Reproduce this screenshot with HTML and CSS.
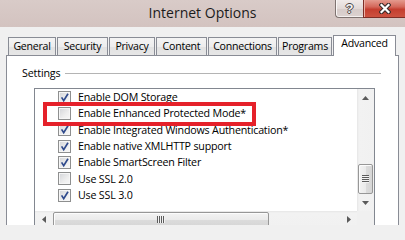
FILE: index.html
```html
<!DOCTYPE html>
<html lang="en">
<head>
<meta charset="utf-8">
<title>Internet Options</title>
<link rel="stylesheet" href="styles.css">
</head>
<body>
<div class="window">
  <header class="titlebar">
    <div class="tb-left"></div>
    <div class="title">Internet Options</div>
    <div class="caption">
      <div class="cap-btn help"><span class="help-glyph">?</span></div>
      <div class="cap-btn close">
        <svg width="12" height="11" viewBox="0 0 12 11">
          <path d="M2.5 2 L9.5 9 M9.5 2 L2.5 9" stroke="#3b2b29" stroke-width="4.4" stroke-linecap="square" fill="none"/>
          <path d="M2.5 2 L9.5 9 M9.5 2 L2.5 9" stroke="#ffffff" stroke-width="2.2" stroke-linecap="square" fill="none"/>
        </svg>
      </div>
    </div>
  </header>
  <div class="client">
    <nav class="tabs">
      <div class="tab t-general">General</div>
      <div class="tab t-security">Security</div>
      <div class="tab t-privacy">Privacy</div>
      <div class="tab t-content">Content</div>
      <div class="tab t-connections">Connections</div>
      <div class="tab t-programs">Programs</div>
      <div class="tab t-advanced active">Advanced</div>
    </nav>
    <section class="panel">
      <div class="group-head">
        <span class="group-label">Settings</span>
        <div class="rule"></div>
      </div>
      <div class="listbox">
        <div class="viewport">
          <div class="items">
            <div class="item"><span class="cb checked"><svg width="11" height="11" viewBox="0 0 11 11"><path d="M2.6 5.4 L4.7 8.6 L9 1.8" stroke="#2f4a8c" stroke-width="1.7" fill="none"/></svg></span><span>Enable DOM Storage</span></div>
            <div class="item"><span class="cb"></span><span>Enable Enhanced Protected Mode*</span></div>
            <div class="item"><span class="cb checked"><svg width="11" height="11" viewBox="0 0 11 11"><path d="M2.6 5.4 L4.7 8.6 L9 1.8" stroke="#2f4a8c" stroke-width="1.7" fill="none"/></svg></span><span>Enable Integrated Windows Authentication*</span></div>
            <div class="item"><span class="cb checked"><svg width="11" height="11" viewBox="0 0 11 11"><path d="M2.6 5.4 L4.7 8.6 L9 1.8" stroke="#2f4a8c" stroke-width="1.7" fill="none"/></svg></span><span>Enable native XMLHTTP support</span></div>
            <div class="item"><span class="cb checked"><svg width="11" height="11" viewBox="0 0 11 11"><path d="M2.6 5.4 L4.7 8.6 L9 1.8" stroke="#2f4a8c" stroke-width="1.7" fill="none"/></svg></span><span>Enable SmartScreen Filter</span></div>
            <div class="item"><span class="cb"></span><span>Use SSL 2.0</span></div>
            <div class="item"><span class="cb checked"><svg width="11" height="11" viewBox="0 0 11 11"><path d="M2.6 5.4 L4.7 8.6 L9 1.8" stroke="#2f4a8c" stroke-width="1.7" fill="none"/></svg></span><span>Use SSL 3.0</span></div>
          </div>
          <div class="callout"></div>
        </div>
        <div class="vscroll">
          <div class="sb-btn"><svg width="7" height="4" viewBox="0 0 7 4"><polygon points="0,4 3.5,0 7,4" fill="#5a5a5a"/></svg></div>
          <div class="vtrack"><div class="vthumb"><div class="vgrip"></div></div></div>
          <div class="sb-btn"><svg width="7" height="4" viewBox="0 0 7 4"><polygon points="0,0 7,0 3.5,4" fill="#5a5a5a"/></svg></div>
        </div>
        <div class="hscroll">
          <div class="sb-btn"><svg width="4" height="7" viewBox="0 0 4 7"><polygon points="4,0 4,7 0,3.5" fill="#5a5a5a"/></svg></div>
          <div class="htrack"><div class="hthumb"><div class="hgrip"></div></div></div>
          <div class="sb-btn"><svg width="4" height="7" viewBox="0 0 4 7"><polygon points="0,0 4,3.5 0,7" fill="#5a5a5a"/></svg></div>
        </div>
        <div class="corner"></div>
      </div>
    </section>
  </div>
</div>
</body>
</html>
```
FILE: styles.css
```css
* { box-sizing: border-box; }
html, body { margin: 0; padding: 0; }
body {
  width: 405px;
  height: 225px;
  overflow: hidden;
  background: #f0f0f0;
  font-family: "Open Sans", "Noto Sans", sans-serif;
  font-size: 11px;
  color: #000;
}
.window { display: flex; flex-direction: column; height: 225px; }

/* title bar */
.titlebar {
  height: 27px;
  flex: none;
  display: grid;
  grid-template-columns: 1fr auto 1fr;
  background: linear-gradient(#d9cbc8, #d3c3c0);
}
.title {
  font-size: 14px;
  line-height: 25px;
  color: #1b1b1b;
  white-space: nowrap;
}
.caption { justify-self: end; display: flex; align-items: flex-start; }
.cap-btn { height: 18px; display: flex; align-items: center; justify-content: center; }
.help {
  width: 28px;
  border: 1px solid #7f7371;
  border-top: none;
  border-right: none;
  border-bottom-left-radius: 4px;
  background: linear-gradient(#f0eae9, #e2d9d7 50%, #d6cbc9 51%, #dcd2d0);
  box-shadow: inset 1px 0 0 #faf7f6, inset 0 -1px 0 #f5f0ef;
}
.help-glyph {
  font-family: "Liberation Sans", sans-serif;
  font-weight: bold;
  font-size: 13px;
  line-height: 13px;
  color: #f4f4f4;
  text-shadow: 1px 0 0 #4a4444, -1px 0 0 #4a4444, 0 1px 0 #4a4444, 0 -1px 0 #4a4444;
}
.close {
  width: 42px;
  border: 1px solid #7e2e26;
  border-top: none;
  border-right: none;
  background: linear-gradient(#e49a8e, #d4675a 40%, #c43e2f 55%, #cd5240);
  box-shadow: inset 1px 0 0 #eab0a6;
}

/* client area */
.client { flex: 1; display: flex; flex-direction: column; padding-top: 8px; }
.tabs { display: flex; align-items: flex-end; height: 20px; margin-left: 8px; }
.tab {
  flex: none;
  height: 18px;
  margin-right: 1px;
  border: 1px solid #898c95;
  border-bottom: none;
  background: linear-gradient(#f4f4f4, #ededed 50%, #e2e2e2 51%, #e6e6e6);
  font-size: 10.6px;
  line-height: 17px;
  text-align: center;
  white-space: nowrap;
  letter-spacing: -0.25px;
}
.t-general { width: 48px; }
.t-security { width: 51px; }
.t-privacy { width: 46px; }
.t-content { width: 51px; }
.t-connections { width: 69px; }
.t-programs { width: 54px; }
.t-advanced { width: 63px; }
.tab.active {
  height: 21px;
  margin-bottom: -1px;
  background: #fff;
  line-height: 15px;
  position: relative;
  z-index: 1;
}

.panel {
  flex: 1;
  margin: 0 6px;
  border: 1px solid #898c95;
  background: #fff;
  padding: 10px 17px 0 15px;
}
.group-head { display: flex; align-items: center; height: 14px; gap: 5px; }
.group-label { white-space: nowrap; font-size: 10.7px; letter-spacing: -0.15px; }
.rule { flex: 1; height: 1px; background: #b4b4b4; }

.listbox {
  margin: 8px 0 0 12px;
  width: 341px;
  height: 141px;
  border: 1px solid #828790;
  display: grid;
  grid-template-columns: 1fr 17px;
  grid-template-rows: 122px 17px;
}
.viewport { position: relative; overflow: hidden; background: #fff; }
.items { padding-left: 23px; font-size: 10.7px; letter-spacing: -0.2px; }
.item { display: flex; align-items: center; height: 16.33px; white-space: nowrap; }
.cb {
  flex: none;
  width: 13px;
  height: 13px;
  margin-right: 7px;
  border: 1px solid #8e8f8f;
  background: linear-gradient(135deg, #d2d4d8, #eeeeee 60%, #f8f8f8);
  box-shadow: inset 0 0 0 1px #f6f6f6;
  display: flex;
  align-items: center;
  justify-content: center;
}
.callout {
  position: absolute;
  left: 8px;
  top: 13px;
  width: 213px;
  height: 24px;
  border: 4px solid #e5212a;
}

/* scrollbars */
.vscroll {
  display: flex;
  flex-direction: column;
  background: linear-gradient(to right, #e6e6e6, #f2f2f2 2px, #f1f1f1);
}
.hscroll {
  display: flex;
  background: linear-gradient(#e6e6e6, #f2f2f2 2px, #f1f1f1);
}
.sb-btn { flex: none; width: 17px; height: 17px; display: flex; align-items: center; justify-content: center; }
.vtrack { flex: 1; display: flex; flex-direction: column; justify-content: flex-end; }
.vthumb {
  height: 30px;
  margin: 0 1px;
  border: 1px solid #979797;
  border-radius: 2px;
  background: linear-gradient(to right, #f3f3f3, #ebebeb 50%, #dcdcdc 51%, #d6d6d6);
  box-shadow: inset 1px 1px 0 #fcfcfc;
  display: flex;
  align-items: center;
  justify-content: center;
}
.vgrip {
  width: 7px;
  height: 8px;
  background: repeating-linear-gradient(#5c5c5c 0 1px, #f2f2f2 1px 2px);
}
.htrack { flex: 1; display: flex; }
.hthumb {
  width: 216px;
  margin: 1px 0 1px 1px;
  border: 1px solid #979797;
  border-radius: 2px;
  background: linear-gradient(#f3f3f3, #ebebeb 50%, #dcdcdc 51%, #d6d6d6);
  box-shadow: inset 1px 1px 0 #fcfcfc;
  display: flex;
  align-items: center;
  justify-content: center;
}
.hgrip {
  width: 8px;
  height: 7px;
  background: repeating-linear-gradient(to right, #5c5c5c 0 1px, #f2f2f2 1px 2px);
}
.corner { background: #f0f0f0; }
```
